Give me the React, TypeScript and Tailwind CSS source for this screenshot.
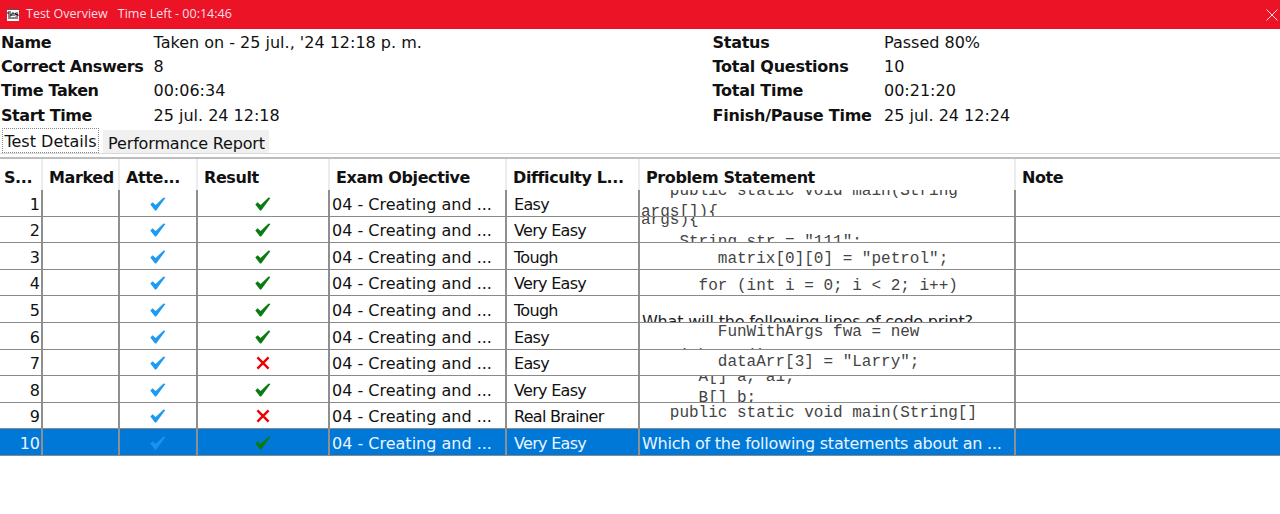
import type { ReactNode } from "react";

const font = "font-['DejaVu_Sans',sans-serif]";
const cols = ["w-[43px]", "w-[77px]", "w-[78px]", "w-[132px]", "w-[177px]", "w-[133px]", "w-[376px]", "flex-1"];
const heads = ["S...", "Marked", "Atte...", "Result", "Exam Objective", "Difficulty L...", "Problem Statement", "Note"];

function Check({ color }: { color: string }) {
  return (
    <svg width="16" height="14" viewBox="0 0 16 14" className="block">
      <path d="M0.3 7.6 L2.6 5.2 L5.6 8 L13.6 0.4 L15.4 1 L6.2 13.6 L5 13.6 Z" fill={color} />
    </svg>
  );
}
function Cross() {
  return (
    <svg width="14" height="14" viewBox="0 0 14 14" className="block">
      <path d="M1.4 1.4 L12.6 12.6 M12.6 1.4 L1.4 12.6" fill="none" stroke="#ee0000" strokeWidth="2.4" />
    </svg>
  );
}

function Mono({ text, top }: { text: string; top: number }) {
  return (
    <div
      className="absolute left-[1px] whitespace-pre font-['Liberation_Mono',monospace] text-[16px] leading-[24px] tracking-normal text-[#444]"
      style={{ top }}
    >
      {text}
    </div>
  );
}

type Row = { h: number; d: string; ok: boolean; p: ReactNode };
const rows: Row[] = [
  { h: 27, d: "Easy", ok: true, p: <><Mono text="   public static void main(String" top={-11} /><Mono text="args[]){" top={10} /></> },
  { h: 26, d: "Very Easy", ok: true, p: <><Mono text="args){" top={-9} /><Mono text={'    String str = "111";'} top={13} /></> },
  { h: 27, d: "Tough", ok: true, p: <Mono text={'        matrix[0][0] = "petrol";'} top={4} /> },
  { h: 26, d: "Very Easy", ok: true, p: <Mono text="      for (int i = 0; i < 2; i++)" top={4} /> },
  { h: 27, d: "Tough", ok: true, p: <div className="absolute left-[2px] top-[16px] whitespace-pre text-[16px] leading-[20px] tracking-[-0.2px] text-[#222]">What will the following lines of code print?</div> },
  { h: 27, d: "Easy", ok: true, p: <><Mono text="        FunWithArgs fwa = new" top={-3} /><Mono text="FunWithArgs();" top={21} /></> },
  { h: 26, d: "Easy", ok: false, p: <Mono text={'        dataArr[3] = "Larry";'} top={0} /> },
  { h: 27, d: "Very Easy", ok: true, p: <><Mono text="      A[] a, a1;" top={-11} /><Mono text="      B[] b;" top={10} /></> },
  { h: 26, d: "Real Brainer", ok: false, p: <Mono text="   public static void main(String[]" top={-2} /> },
  { h: 27, d: "Very Easy", ok: true, p: null },
];

export default function App() {
  return (
    <div className={`h-[514px] w-[1280px] overflow-hidden bg-white ${font} text-[16px] text-[#111]`}>
      <div className="flex h-[29px] items-center justify-between bg-[#ec1327] pl-[7px] pr-[2px] font-['Open_Sans',sans-serif] text-[12.5px] text-[#fbdfe2]">
        <div className="flex items-center">
          <svg width="12" height="12" viewBox="0 0 12 12" className="mr-[7px]">
            <rect width="12" height="12" fill="#fff" />
            <path d="M0 .5h12" stroke="#555" strokeWidth="1" />
            <path d="M1 3h3M1 3v2h3v2H1M5 4v3M5 4h2v3M8.500 4h2.500M8.500 4v1.500h2.500v1.500H8.500M1 9h10" stroke="#111" strokeWidth="1" fill="none" />
          </svg>
          <span>Test Overview</span>
          <span className="ml-[10px]">Time Left - 00:14:46</span>
        </div>
        <svg width="12" height="12" viewBox="0 0 12 12">
          <path d="M.5.5 11.500 11.500M11.500.5.5 11.500" stroke="#fbdfe2" strokeWidth="1" />
        </svg>
      </div>

      <div className="flex h-[99px] flex-col pt-[1px]">
        {[
          ["Name", "Taken on - 25 jul., '24 12:18 p. m.", "Status", "Passed 80%"],
          ["Correct Answers", "8", "Total Questions", "10"],
          ["Time Taken", "00:06:34", "Total Time", "00:21:20"],
          ["Start Time", "25 jul. 24 12:18", "Finish/Pause Time", "25 jul. 24 12:24"],
        ].map((r) => (
          <div key={r[0]} className="flex h-[24.2px] shrink-0 items-center whitespace-nowrap pt-[2px] leading-none">
            <span className="w-[153.500px] pl-[1px] font-bold tracking-[-0.4px]">{r[0]}</span>
            <span className="w-[559px]">{r[1]}</span>
            <span className="w-[171.500px] font-bold tracking-[-0.25px]">{r[2]}</span>
            <span>{r[3]}</span>
          </div>
        ))}
      </div>

      <div className="flex h-[26px] items-start border-b border-[#d9d9d9]">
        <div className="ml-[2px] flex h-[25px] w-[97px] items-center justify-center border border-dotted border-[#888] bg-white pt-[3px] leading-none">Test Details</div>
        <div className="ml-[4px] mt-[2px] flex h-[23px] w-[166px] items-center justify-center bg-[#f0f0f0] pl-[1px] pt-[4px] leading-none tracking-[-0.15px]">Performance Report</div>
      </div>
      <div className="h-[3px]" />

      <div className="border-t-2 border-[#bdbdbd]">
        <div className="flex h-[31px] font-bold tracking-[-0.4px]">
          {heads.map((h, i) => (
            <div key={h} className={`${cols[i]} flex items-center whitespace-nowrap ${i < 7 ? "border-r-2 border-[#ececec]" : ""} pt-[6px] ${i === 0 ? "pl-[4px]" : i === 7 ? "pl-[6px]" : "pl-[6px]"} leading-none`}>
              {h}
            </div>
          ))}
        </div>
        {rows.map((r, i) => {
          const sel = i === 9;
          return (
            <div
              key={i}
              className={`flex overflow-hidden border-b border-[#8a8a8a] ${sel ? "bg-[#0078d7] text-[#eaf5ff]" : ""}`}
              style={{ height: r.h }}
            >
              <div className={`${cols[0]} flex items-center justify-end border-r-2 border-[#8f8f8f] pr-[1px] pt-[3px] leading-none`}>{i + 1}</div>
              <div className={`${cols[1]} border-r-2 border-[#8f8f8f]`} />
              <div className={`${cols[2]} flex items-center justify-center border-r-2 border-[#8f8f8f] pt-[1px]`}>
                <Check color={sel ? "#1a93f0" : "#1e9bf0"} />
              </div>
              <div className={`${cols[3]} flex items-center justify-center border-r-2 border-[#8f8f8f] pt-[1px]`}>
                {r.ok ? <Check color="#0a7a12" /> : <Cross />}
              </div>
              <div className={`${cols[4]} flex items-center whitespace-nowrap border-r-2 border-[#8f8f8f] pl-[2px] pt-[3px] leading-none`}>04 - Creating and ...</div>
              <div className={`${cols[5]} flex items-center whitespace-nowrap border-r-2 border-[#8f8f8f] pl-[7px] pt-[3px] leading-none tracking-[-0.7px]`}>{r.d}</div>
              <div className={`${cols[6]} relative flex items-center overflow-hidden whitespace-nowrap border-r-2 border-[#8f8f8f] pl-[2px] pt-[3px] leading-none tracking-[-0.24px]`}>
                {sel ? "Which of the following statements about an ..." : r.p}
              </div>
              <div className={cols[7]} />
            </div>
          );
        })}
      </div>
    </div>
  );
}
